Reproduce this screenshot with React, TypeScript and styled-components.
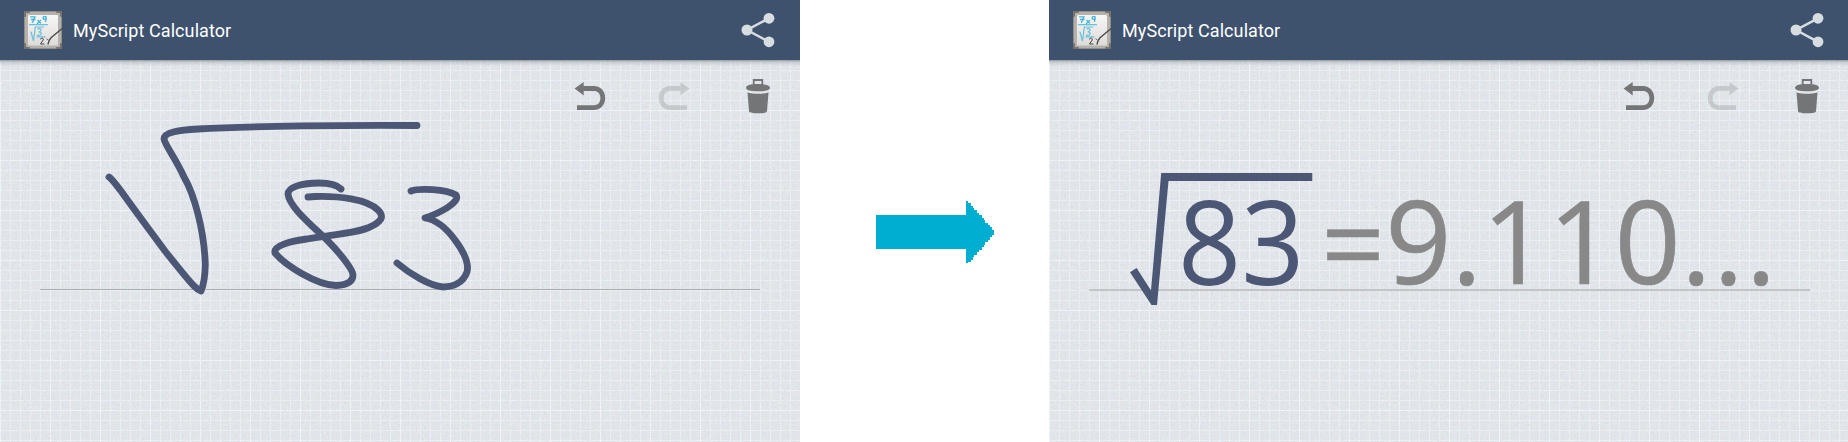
import React, { useId } from "react";
import styled, { createGlobalStyle } from "styled-components";

const GlobalStyle = createGlobalStyle`
  * { box-sizing: border-box; }
  body { margin: 0; background: #fff; overflow: hidden; }
  svg { display: block; flex: none; overflow: visible; }
`;

const Page = styled.main`
  display: flex;
  align-items: stretch;
  width: 1848px;
  height: 442px;
  overflow: hidden;
  background: #fff;
`;

const Screen = styled.section`
  display: flex;
  flex: none;
  flex-direction: column;
  width: 800px;
  overflow: hidden;
`;

const AppBar = styled.header`
  display: flex;
  align-items: center;
  flex: none;
  height: 60px;
  padding: 0 25px 0 24px;
  background: #3e526d;
`;

const Title = styled.h1`
  margin: 0 auto 0 11px;
  padding-top: 2px;
  color: #fff;
  font: 400 18px/24px Roboto, sans-serif;
  letter-spacing: 0.08px;
`;

const Paper = styled.div`
  display: grid;
  flex: 1;
  grid-template: 382px / 100%;
  isolation: isolate;
  background:
    linear-gradient(rgba(70, 75, 85, 0.6), rgba(90, 95, 105, 0.22) 2px, rgba(90, 95, 105, 0) 6px) 0 0 / 100% 6px no-repeat,
    linear-gradient(#f0f4f9 1px, transparent 1px) 0 0 / 50px 50px,
    linear-gradient(90deg, #f0f4f9 1px, transparent 1px) 0 0 / 50px 50px,
    linear-gradient(#ebeff4 1px, transparent 1px) 0 0 / 10px 10px,
    linear-gradient(90deg, #ebeff4 1px, transparent 1px) 0 0 / 10px 10px,
    #e1e5ea;

  > * { grid-area: 1 / 1; }
`;

const GrainLayer = styled.svg`
  z-index: -1;
  width: 100%;
  height: 382px;
  opacity: 0.1;
`;

const Toolbar = styled.nav`
  display: flex;
  align-items: flex-start;
  justify-content: flex-end;
  gap: 50px;
  height: 60px;
  padding: 18px 29px 0 0;

  > :last-child { margin-left: 5px; }
`;

const Baseline = styled.hr<{ $size: number; $color: string }>`
  width: ${(p) => 719 + p.$size}px;
  height: ${(p) => p.$size}px;
  margin: 229px 0 0 40px;
  border: 0;
  background: ${(p) => p.$color};
`;

const Formula = styled.div`
  display: flex;
  align-items: flex-start;
  margin: 113px 0 0 81px;
  font: 400 116px/120px "Open Sans", sans-serif;
`;

const Radicand = styled.span`
  margin-left: -136.5px;
  padding-top: 7px;
  color: #4b5775;
  font-size: 117px;
  transform: scaleX(0.944);
  transform-origin: 0 0;
`;

const Equals = styled.span`
  margin: 6px -2.5px 0 10px;
  color: #888;
  transform: translateY(0.5px) scaleX(0.965);
  transform-origin: 0 0;
  -webkit-text-stroke: 0.4px #888;
`;

const Result = styled.span<{ $spacing?: number }>`
  padding-top: 6px;
  color: #888;
  letter-spacing: ${(p) => p.$spacing ?? 0}px;
  -webkit-text-stroke: 0.6px #888;
`;

const Gap = styled.div`
  display: flex;
  flex: none;
  width: 249px;
  padding: 201px 0 0 76px;
`;

const LogoIcon = () => (
  <svg width="38" height="38" viewBox="0 0 38 38" fill="none" strokeLinecap="round">
    <defs>
      <linearGradient id="board" x1="0" y1="0" x2="0" y2="1">
        <stop offset="0" stopColor="#f7f7f6" />
        <stop offset="1" stopColor="#dedcda" />
      </linearGradient>
    </defs>
    <rect x="0.5" y="0.5" width="37" height="37" rx="2" fill="#b5b2ac" stroke="#918e89" />
    <path d="M1 5V1h4M33 1h4v4M1 33v4h4M33 37h4v-4" stroke="#77726b" strokeWidth="2" />
    <rect x="4" y="4" width="30" height="30.500" rx="1" fill="url(#board)" />
    <path d="M6.500 5.800h4.500c-.6 2-1.700 3.500-2.500 5.500M7.500 8.500h3.500M14 9.500l2.500 2.500m0-2.500L13.500 12.500M22 6c-1.500-1.500-4 .5-2.500 2s3.300-1 2.500-2c.5 2 .2 3-.5 4.500" stroke="#42b5d4" strokeWidth="1.300" />
    <path d="M5.500 13.700h18M7 21l2.500 9 1.800-14h8.500M14 17.800c5-1 3 2.500.7 3.200 4.500 0 2.500 4-1.200 3.100M13 25.800h8" stroke="#68c0da" strokeWidth="1.200" />
    <path d="M16.500 28c1.300-1.500 3.400-.8 2.700 1L16.500 33h3.500" stroke="#464646" strokeWidth="1" />
    <path d="M24 33c.5-2 1-4 3-6.300L37.500 18" stroke="#484747" strokeWidth="1.300" />
    <path d="M22.800 28l3 2" stroke="#6b6a69" strokeWidth="0.900" />
  </svg>
);

const ShareIcon = () => (
  <svg width="34" height="36" viewBox="0 0 34 36" fill="#d8dde2">
    <path d="M28 6.300L6 18l22 11.800" fill="none" stroke="#d8dde2" strokeWidth="2.500" />
    <circle cx="28" cy="6.300" r="5.400" />
    <circle cx="6" cy="18" r="5.500" />
    <circle cx="28" cy="29.800" r="5.400" />
  </svg>
);

const TurnIcon = ({ redo = false }: { redo?: boolean }) => (
  <svg width="33" height="34" viewBox="0 0 33 34" opacity={redo ? 0.25 : 1}>
    <g transform={redo ? "translate(33 0) scale(-1 1)" : undefined} fill="#747576">
      <path d="M.6 10.500L9.700 4v4.100H20c5.500 0 11.200 4 11.200 11.900S25.500 32 20 32H3v-4.800h17c3.500 0 6.400-2.400 6.400-7.200S23.500 12.900 20 12.900H9.700v4.600z" />
    </g>
  </svg>
);

const TrashIcon = () => (
  <svg width="26" height="36" viewBox="0 0 26 36" fill="#747576">
    <path d="M8.700 7V2h8.600v5" fill="none" stroke="#747576" strokeWidth="1.800" />
    <path d="M1 9.700C1 7.500 5 6 13 6s12 1.500 12 3.700S21 13.300 13 13.300 1 12 1 9.700z" />
    <path d="M2.500 14.500c6 1.800 15 1.800 21 0l-1.500 18.500c-.2 2-3.500 2.300-9 2.300S4.200 35 4 33z" />
  </svg>
);

const Handwriting = () => (
  <svg width="800" height="382" viewBox="0 60 800 382" fill="none" stroke="#4b5775" strokeWidth="6.800" strokeLinecap="round" strokeLinejoin="round">
    <path d="M109 177C113 180 117 186 121 191C136 212 151 232 165 251C177 266 188 280 194 286Q198 290 201 291Q205 282 205.300 264C204 229 194 194 184 177C176 159 165 145 164 139C164 132 180 130 198 129C250 126 350 125 417 125.500" />
    <path d="M341 189C336 184 328 183 319 183C302 183 288 187 288 194C289 206 309 223 326 239C341 254 353 270 353 275C353 282 346 285 336 285.500C317 285 286 266 275 253C273 246 290 241 307 239C330 235 360 233 372 226C384 220 383 215 378 210C367 199 338 196 316 196.500L308 197" />
    <path d="M411 191C419 188 446 189 456 195C461 202 440 213 425 218C438 220 447 229 455 240C464 252 469 264 467 272C463 283 453 287 443 287C430 286 410 274 397 263" />
  </svg>
);

const Radical = () => (
  <svg width="184" height="134" viewBox="0 0 184 134" fill="none" stroke="#4b5775">
    <path d="M182.300 4H37.800" strokeWidth="8" />
    <path d="M0 99.300L6.600 95 21 117.500 31.200 0H38.500V8L27 132H21.500z" fill="#4b5775" stroke="none" />
  </svg>
);

const Arrow = () => (
  <svg width="118" height="63" viewBox="0 0 118 63" fill="#00aed1" shapeRendering="crispEdges">
    <path d="M0 14h90V0h2v2h3v3h2v2h1v2h3v3h2v2h3v3h2v2h1v3h3v2h2v2h2v3h2v5h-2v2h-2v3h-2v2h-3v3h-1v2h-2v3h-3v2h-2v3h-3v2h-1v3h-2v2h-3v1h-2V48H0z" />
  </svg>
);

const Grain = () => {
  const id = useId().replace(/[^\w]/g, "");
  return (
    <GrainLayer>
      <filter id={id} x="0" y="0" width="100%" height="100%" colorInterpolationFilters="sRGB">
        <feTurbulence type="fractalNoise" baseFrequency="0.45" numOctaves="2" seed="4" />
        <feColorMatrix values="1 0 0 0 0.400  0 1 0 0 0.420  0 0 1 0 0.430  0 0 0 0 1" />
      </filter>
      <rect width="100%" height="382" filter={`url(#${id})`} />
    </GrainLayer>
  );
};

type CalculatorProps = {
  lineSize: number;
  lineColor: string;
  children: React.ReactNode;
};

const Calculator = ({ lineSize, lineColor, children }: CalculatorProps) => (
  <Screen>
    <AppBar>
      <LogoIcon />
      <Title>MyScript Calculator</Title>
      <ShareIcon />
    </AppBar>
    <Paper>
      <Grain />
      <Baseline $size={lineSize} $color={lineColor} />
      {children}
      <Toolbar>
        <TurnIcon />
        <TurnIcon redo />
        <TrashIcon />
      </Toolbar>
    </Paper>
  </Screen>
);

export default function App() {
  return (
    <>
      <GlobalStyle />
      <Page>
        <Calculator lineSize={1} lineColor="#aaacaf">
          <Handwriting />
        </Calculator>
        <Gap>
          <Arrow />
        </Gap>
        <Calculator lineSize={2} lineColor="#c2c4c8">
          <Formula>
            <Radical />
            <Radicand>83</Radicand>
            <Equals>=</Equals>
            <Result>9.110</Result>
            <Result $spacing={1.9}>...</Result>
          </Formula>
        </Calculator>
      </Page>
    </>
  );
}
